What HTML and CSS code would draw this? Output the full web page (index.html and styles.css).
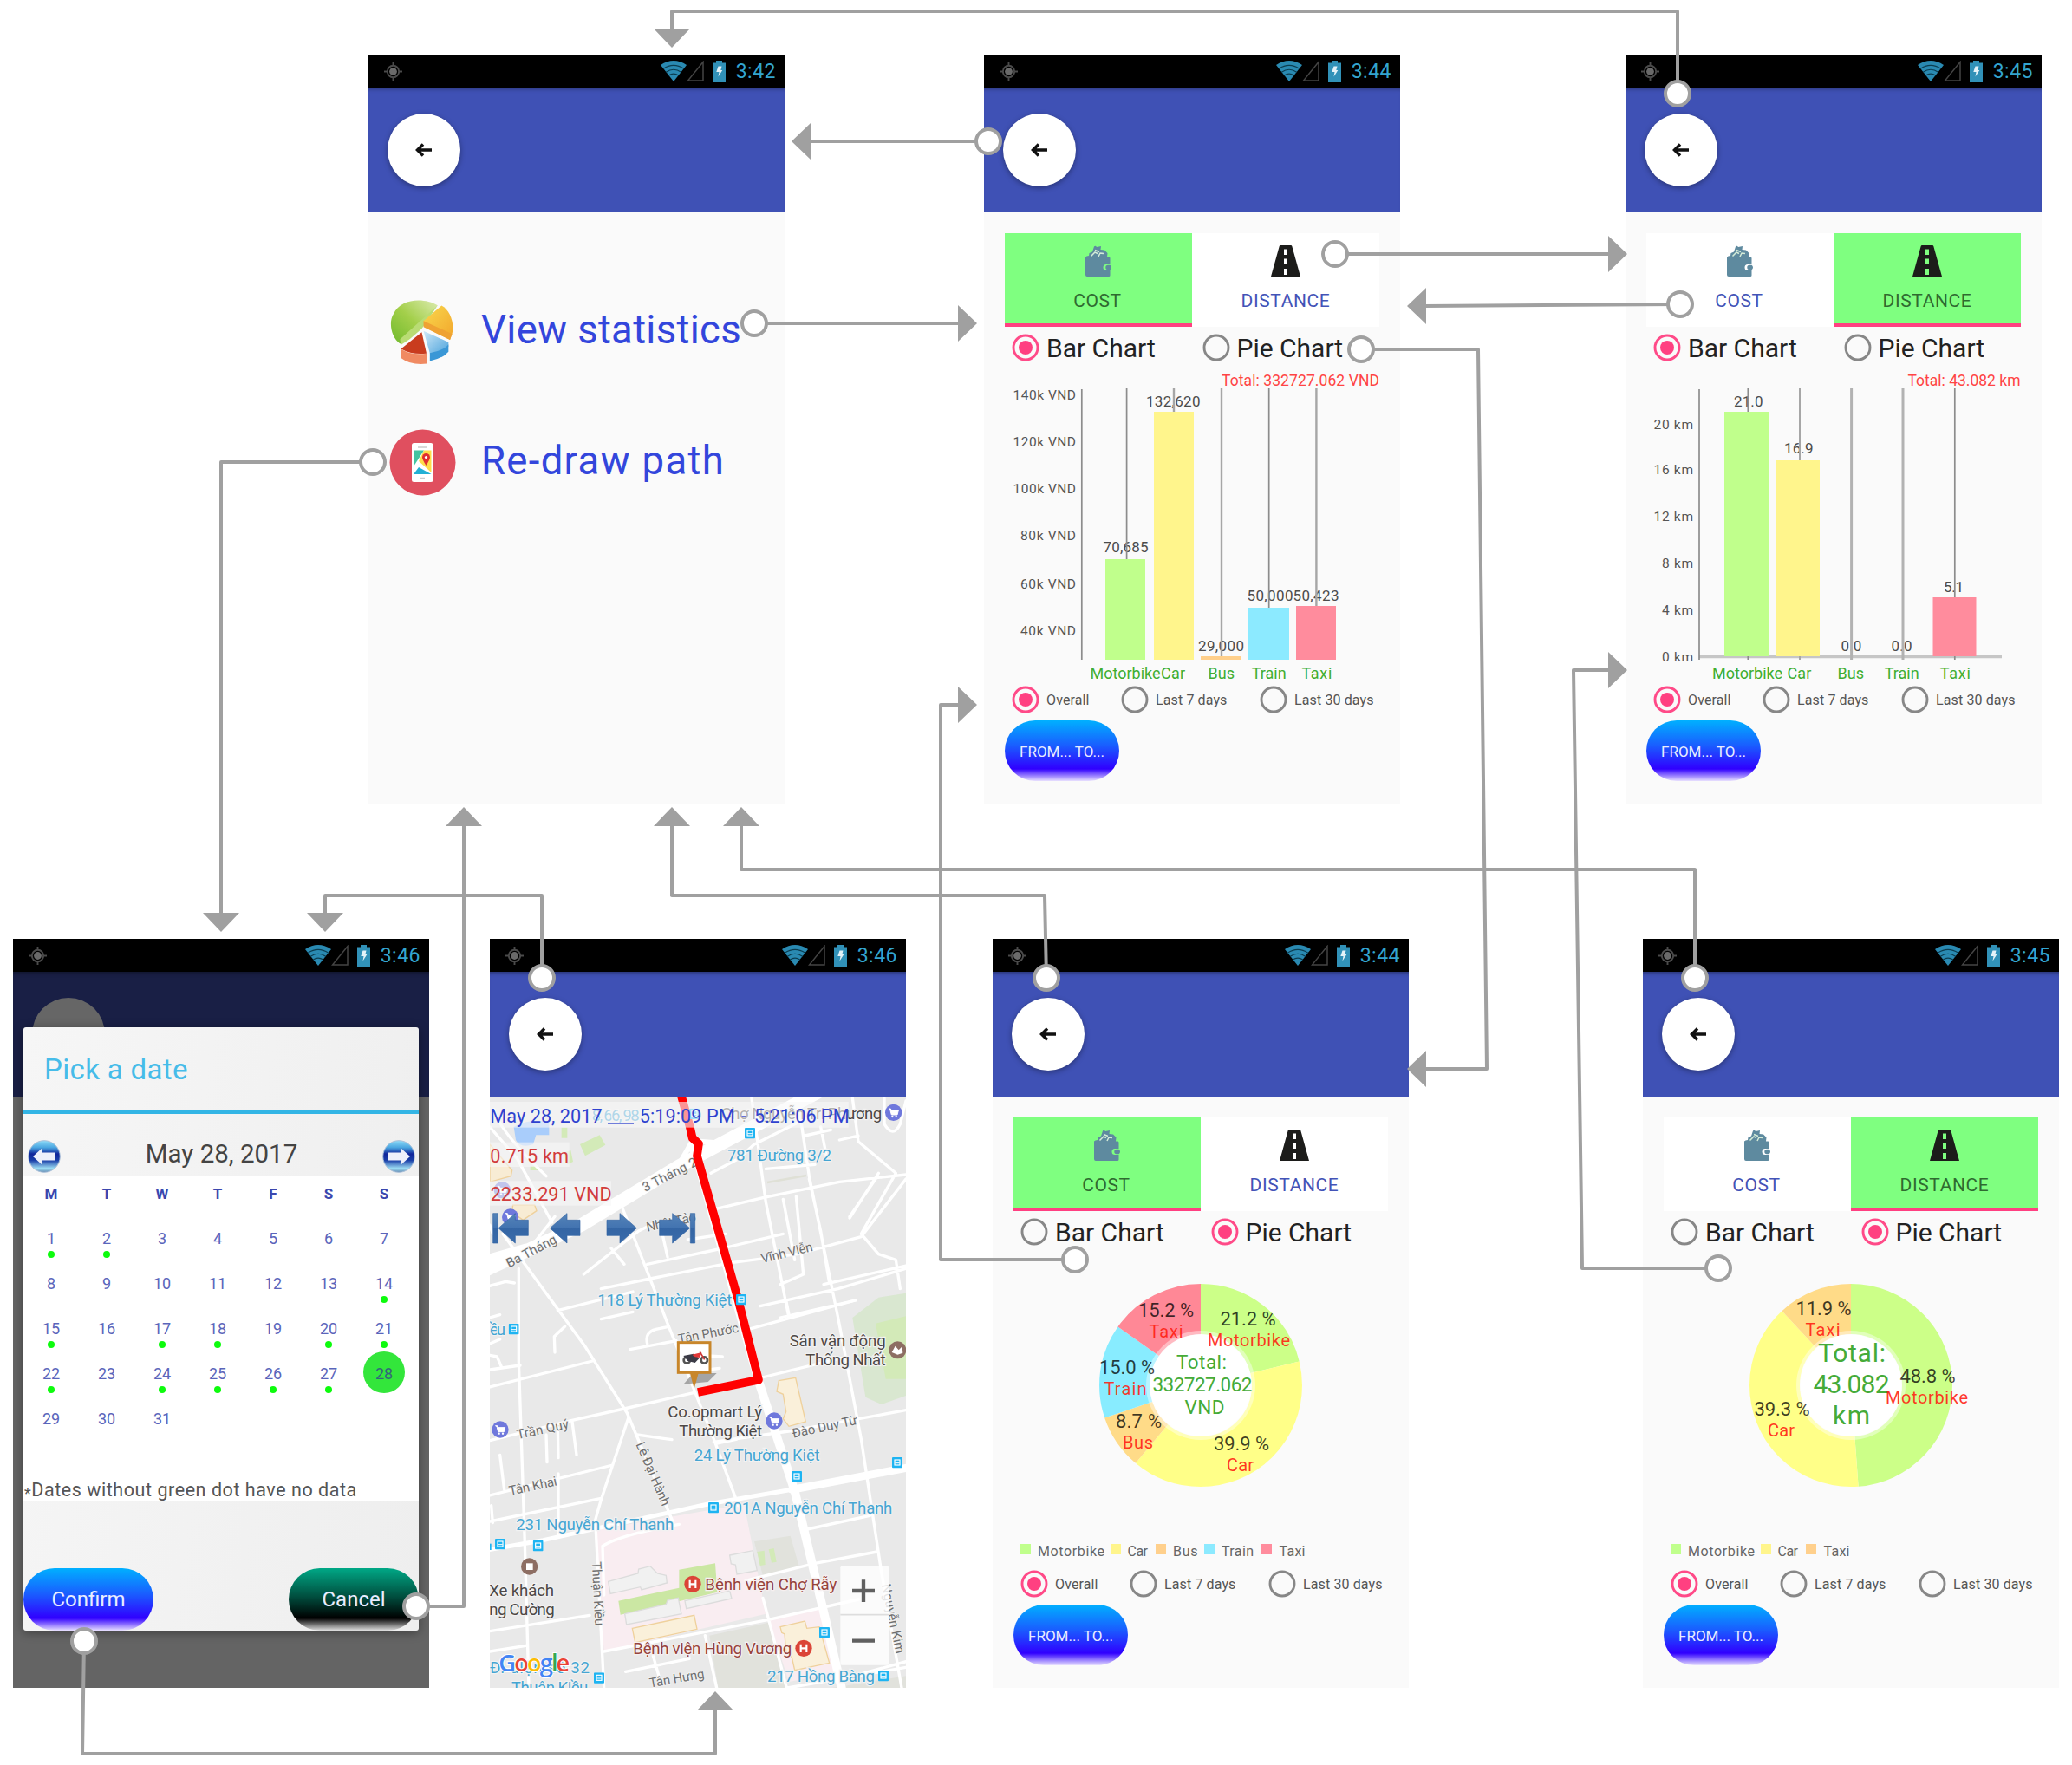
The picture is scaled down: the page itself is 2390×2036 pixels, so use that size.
FILE: index.html
```html
<!DOCTYPE html>
<html lang="en">
<head>
<meta charset="utf-8">
<title>Statistics and path screens flow</title>
<link rel="stylesheet" href="styles.css">
</head>
<body>
<svg class="defs" width="0" height="0" aria-hidden="true">
  <defs>
    <linearGradient id="gGreen" x1="0" y1="1" x2="1" y2="0"><stop offset="0" stop-color="#6fb92c"/><stop offset=".5" stop-color="#a3cf4a"/><stop offset="1" stop-color="#dcebb0"/></linearGradient>
    <linearGradient id="gYellow" x1="0" y1="0" x2="1" y2="1"><stop offset="0" stop-color="#f9d84d"/><stop offset="1" stop-color="#f2a62c"/></linearGradient>
    <linearGradient id="gBlue" x1="0" y1="0" x2="1" y2="1"><stop offset="0" stop-color="#cfe8f8"/><stop offset="1" stop-color="#4ba3dc"/></linearGradient>
    <linearGradient id="gOrb" x1="0" y1="0" x2="0" y2="1"><stop offset="0" stop-color="#8fdcf8"/><stop offset=".22" stop-color="#4aa5e0"/><stop offset=".42" stop-color="#10249a"/><stop offset=".62" stop-color="#1a3fa8"/><stop offset=".88" stop-color="#9fe0f5"/><stop offset="1" stop-color="#5f86b0"/></linearGradient>
    <linearGradient id="gStep" x1="0" y1="0" x2="0" y2="1"><stop offset="0" stop-color="#5583b8"/><stop offset=".5" stop-color="#4273b0"/><stop offset=".52" stop-color="#3465a4"/><stop offset="1" stop-color="#3a6cab"/></linearGradient>
    <symbol id="gps" viewBox="0 0 22 22"><circle cx="11" cy="11" r="7" fill="none" stroke="#4b4b4b" stroke-width="2"/><circle cx="11" cy="11" r="4.600" fill="#6a6a6a"/><path d="M11 0v4M11 18v4M0 11h4M18 11h4" stroke="#4b4b4b" stroke-width="2"/></symbol>
    <symbol id="wifi" viewBox="0 0 30 24"><path d="M0 5Q15-5 30 5L15 24Z" fill="#2a8ab2"/><path d="M3.2 9.2Q15 1.5 26.8 9.2M6.3 13.2Q15 7.3 23.7 13.2M9.3 17Q15 13.3 20.7 17" fill="none" stroke="#0b3d50" stroke-width="1.2"/></symbol>
    <symbol id="signal" viewBox="0 0 20 24"><path d="M19 1.5V23H1.5Z" fill="none" stroke="#444" stroke-width="1.5"/></symbol>
    <symbol id="battery" viewBox="0 0 15 25"><path d="M4 0h7v2.500h4V25H0V2.500h4Z" fill="#3191b8"/><path d="M6.500 6.500h4L9.300 11h2L6.500 18.500 7.500 13H4.300Z" fill="#e4f2f8"/></symbol>
    <symbol id="back" viewBox="0 0 20 16"><path d="M9 1.500 2.500 8 9 14.500M3 8H19" fill="none" stroke="#111" stroke-width="3.500"/></symbol>
    <symbol id="wallet" viewBox="0 0 30 36"><path d="M0 13.500Q1 12 4 12L4.500 9 8 7.500 10 1.500Q11.500 0 13 2L18 1 17.500 5 22 5.500 25.500 9 25 13.500H27.500Q28.500 13.500 28.500 15V22H24a3.500 3.500 0 0 0 0 7h4.500V34.500Q28.500 36 27 36H2Q0 36 0 34Z" fill="#5e8a9f"/><path d="M6.500 12.500 11 8l3 1.500M15 13l2-4 4 .5M11 5.500l5 2" fill="none" stroke="#d4ecd8" stroke-width="1.500"/><path d="M26 22.800h2.500q1.500 1 1.500 2.700t-1.500 2.700H26a2.700 2.700 0 0 1 0-5.400Z" fill="#5e8a9f"/></symbol>
    <symbol id="road" viewBox="0 0 34 36"><path fill-rule="evenodd" d="M11 0H23Q24 0 24.300 1L34 36H0L9.700 1Q10 0 11 0ZM15 4.500V11h4V4.500ZM15 15.500V22h4V15.500ZM15 27V34h4V27Z" fill="#1c1c1a"/></symbol>
    <symbol id="radio-on" viewBox="0 0 32 32"><circle cx="16" cy="16" r="14" fill="none" stroke="#ff4a88" stroke-width="2.900"/><circle cx="16" cy="16" r="8" fill="#ff4081"/></symbol>
    <symbol id="radio-off" viewBox="0 0 32 32"><circle cx="16" cy="16" r="14" fill="none" stroke="#878787" stroke-width="2.900"/></symbol>
    <symbol id="orb-left" viewBox="0 0 38 38"><circle cx="19" cy="19" r="18.300" fill="url(#gOrb)" stroke="#a9bfd8" stroke-width="1"/><path d="M6 19 17 9V14.500H31V23.500H17V29Z" fill="#eef0fb"/></symbol>
    <symbol id="orb-right" viewBox="0 0 38 38"><circle cx="19" cy="19" r="18.300" fill="url(#gOrb)" stroke="#a9bfd8" stroke-width="1"/><path d="M32 19 21 9V14.500H7V23.500H21V29Z" fill="#eef0fb"/></symbol>
    <symbol id="bus" viewBox="0 0 36 40"><rect width="36" height="37" rx="3" fill="#1eb4f2"/><rect x="9" y="9" width="18" height="18" fill="none" stroke="#fff" stroke-width="3.500"/><path d="M10 20h16" stroke="#fff" stroke-width="3"/></symbol>
    <symbol id="cart" viewBox="0 0 60 60"><circle cx="30" cy="30" r="29" fill="#6f78dc"/><path d="M13 17h7l3 6h24l-4 15H23L19 23" fill="#fff" stroke="#fff" stroke-width="3"/><circle cx="26" cy="44" r="3.500" fill="#fff"/><circle cx="39" cy="44" r="3.500" fill="#fff"/></symbol>
    <symbol id="hospital" viewBox="0 0 60 60"><circle cx="30" cy="30" r="29" fill="#db4437"/><path d="M20 16V44M40 16V44M20 30H40" stroke="#fff" stroke-width="6.500"/></symbol>
  </defs>
</svg>

<main class="board">
  <section class="phone menu-screen">
    <div class="status"><svg class="i-gps"><use href="#gps"/></svg><svg class="i-wifi"><use href="#wifi"/></svg><svg class="i-signal"><use href="#signal"/></svg><svg class="i-battery"><use href="#battery"/></svg><span class="time">3:42</span></div>
    <header class="appbar"><div class="back"><svg><use href="#back"/></svg></div></header>
    <nav class="menu">
      <div class="menu-item">
        <svg class="menu-icon" viewBox="144 874 222 193" preserveAspectRatio="none">
          <path d="M180 1003C150 985 141 940 158 917C180 872 260 868 305 892L262 930Z" fill="url(#gGreen)"/>
          <path d="M305 892 180 990 182 1007 212 990 252 960Z" fill="#b9dc74"/>
          <path d="M258 937 318 893C346 905 362 945 353 975L346 992 262 955Z" fill="url(#gYellow)"/>
          <path d="M258 955 346 992 353 975 258 937Z" fill="#efa233"/>
          <path d="M258 966 341 999V1012Q320 1027 280 1034Z" fill="url(#gBlue)"/>
          <path d="M341 1005V1026Q320 1047 279 1053V1030Q325 1023 341 1005Z" fill="#3a97d6"/>
          <path d="M252 970 183 1018Q220 1036 268 1031Z" fill="#c93c1e"/>
          <path d="M182 1018Q220 1038 269 1031V1061Q215 1066 184 1045Z" fill="#f08a62"/>
        </svg>
        <span>View statistics</span>
      </div>
      <div class="menu-item">
        <svg class="menu-icon" viewBox="0 0 77 77"><circle cx="38.500" cy="38.500" r="38" fill="#e04f5f"/><rect x="26" y="16" width="24.500" height="45" rx="2.500" fill="#fff"/><path d="M28 24.500H40L28 43Z" fill="#44c4a1"/><path d="M40 24.500H48.500V50L34 37Z" fill="#fedd4a"/><path d="M28 52 34 44 48.500 52Z" fill="#22b0d4"/><path d="M42.500 42Q38 35 38 32.500a4.500 4.500 0 0 1 9 0Q47 35 42.500 42Z" fill="#e02f2f"/><circle cx="42.500" cy="32.500" r="1.600" fill="#fff"/><path d="M33 21h11M36 56.500h5" stroke="#ccc" stroke-width="1.300"/></svg>
        <span class="redraw">Re-draw path</span>
      </div>
    </nav>
  </section>

  <section class="phone cost-bar-screen">
    <div class="status"><svg class="i-gps"><use href="#gps"/></svg><svg class="i-wifi"><use href="#wifi"/></svg><svg class="i-signal"><use href="#signal"/></svg><svg class="i-battery"><use href="#battery"/></svg><span class="time">3:44</span></div>
    <header class="appbar"><div class="back"><svg><use href="#back"/></svg></div></header>
    <div class="tabs">
      <div class="tab selected"><svg class="wallet"><use href="#wallet"/></svg><span>COST</span></div>
      <div class="tab"><svg class="road"><use href="#road"/></svg><span>DISTANCE</span></div>
    </div>
    <div class="kinds">
      <label><svg><use href="#radio-on"/></svg>Bar Chart</label>
      <label><svg><use href="#radio-off"/></svg>Pie Chart</label>
    </div>
    <svg class="chart" viewBox="0 362 480 358">
      <path d="M140 582h46V698h-46Z" fill="#c0ff8c"/><path d="M196 412h46V698h-46Z" fill="#fff58c"/><path d="M250 694h46v4h-46Z" fill="#ffd08c"/><path d="M304 638h48v60h-48Z" fill="#8ceaff"/><path d="M360 636h46v62h-46Z" fill="#ff8c9d"/>
      <text class="total" x="274" y="381.700" textLength="182">Total: 332727.062 VND</text>
      <g class="ticks"><text x="33.500" y="397.700" textLength="72.500">140k VND</text><text x="33.500" y="452" textLength="72.500">120k VND</text><text x="33.500" y="506" textLength="72.500">100k VND</text><text x="42" y="560" textLength="64">80k VND</text><text x="42" y="615.700" textLength="64">60k VND</text><text x="42" y="669.700" textLength="64">40k VND</text></g>
      <g class="values"><text x="137.500" y="573.700" textLength="52">70,685</text><text x="187" y="406" textLength="62.500">132,620</text><text x="247" y="687.700" textLength="53">29,000</text><text x="303.500" y="630" textLength="53">50,000</text><text x="356.500" y="630" textLength="53">50,423</text></g>
      <g fill="none" stroke="#8c8c8c" stroke-width="1.700"><path d="M112.800 386V698"/><path d="M164.600 384.500V582M328.700 384.500V638"/><path stroke="#a6a6a6" stroke-width="2.400" d="M219 384.500V412M274 384.500V694M383.400 384.500V636"/></g>
      <g class="cats"><text x="122.500" y="720.300" textLength="81">Motorbike</text><text x="204" y="720.300" textLength="28">Car</text><text x="258.500" y="720.300" textLength="30.500">Bus</text><text x="308.700" y="720.300" textLength="40">Train</text><text x="366.400" y="720.300" textLength="35">Taxi</text></g>
    </svg>
    <div class="ranges">
      <label><svg><use href="#radio-on"/></svg>Overall</label><label><svg><use href="#radio-off"/></svg>Last 7 days</label><label><svg><use href="#radio-off"/></svg>Last 30 days</label>
    </div>
    <div class="pill from-to">FROM... TO...</div>
  </section>

  <section class="phone distance-bar-screen">
    <div class="status"><svg class="i-gps"><use href="#gps"/></svg><svg class="i-wifi"><use href="#wifi"/></svg><svg class="i-signal"><use href="#signal"/></svg><svg class="i-battery"><use href="#battery"/></svg><span class="time">3:45</span></div>
    <header class="appbar"><div class="back"><svg><use href="#back"/></svg></div></header>
    <div class="tabs">
      <div class="tab"><svg class="wallet"><use href="#wallet"/></svg><span>COST</span></div>
      <div class="tab selected"><svg class="road"><use href="#road"/></svg><span>DISTANCE</span></div>
    </div>
    <div class="kinds">
      <label><svg><use href="#radio-on"/></svg>Bar Chart</label>
      <label><svg><use href="#radio-off"/></svg>Pie Chart</label>
    </div>
    <svg class="chart" viewBox="0 362 480 358">
      <path d="M85 694.300H434" stroke="#c6c6c6" stroke-width="4"/>
      <text class="total" x="325.500" y="381.700" textLength="130">Total: 43.082 km</text>
      <g class="ticks"><text x="32.500" y="431.700" textLength="45.500">20 km</text><text x="32.500" y="484" textLength="45.500">16 km</text><text x="32.500" y="538" textLength="45.500">12 km</text><text x="42" y="592" textLength="36">8 km</text><text x="42" y="645.700" textLength="36">4 km</text><text x="42" y="699.700" textLength="36">0 km</text></g>
      <g class="values"><text x="125" y="406" textLength="33.500">21.0</text><text x="183" y="459.700" textLength="33.500">16.9</text><text x="248.400" y="687.700" textLength="24">0.0</text><text x="306.600" y="687.700" textLength="24">0.0</text><text x="367" y="620" textLength="23">5.1</text></g>
      <g fill="none" stroke="#8c8c8c" stroke-width="1.700"><path d="M85 386V698"/><path d="M141.300 384.500V698M379.800 384.500V698"/><path stroke="#a6a6a6" stroke-width="2" d="M201 384.500V698"/><path stroke="#b2b2b2" stroke-width="3" d="M260.600 384.500V698M320 384.500V698"/></g>
      <path d="M114 412h52V694h-52Z" fill="#c0ff8c"/><path d="M174 468h50V694h-50Z" fill="#fff58c"/><path d="M354.500 626h50v68h-50Z" fill="#ff8c9d"/>
      <g class="cats"><text x="100" y="720.300" textLength="81">Motorbike</text><text x="186.400" y="720.300" textLength="28">Car</text><text x="244.500" y="720.300" textLength="30.500">Bus</text><text x="298.700" y="720.300" textLength="40">Train</text><text x="362.800" y="720.300" textLength="35">Taxi</text></g>
    </svg>
    <div class="ranges">
      <label><svg><use href="#radio-on"/></svg>Overall</label><label><svg><use href="#radio-off"/></svg>Last 7 days</label><label><svg><use href="#radio-off"/></svg>Last 30 days</label>
    </div>
    <div class="pill from-to">FROM... TO...</div>
  </section>

  <section class="phone date-screen">
    <div class="status"><svg class="i-gps"><use href="#gps"/></svg><svg class="i-wifi"><use href="#wifi"/></svg><svg class="i-signal"><use href="#signal"/></svg><svg class="i-battery"><use href="#battery"/></svg><span class="time">3:46</span></div>
    <header class="appbar"><div class="back"></div></header>
    <div class="dialog">
      <h2 class="dialog-title">Pick a date</h2>
      <div class="month"><svg><use href="#orb-left"/></svg><span>May 28, 2017</span><svg><use href="#orb-right"/></svg></div>
      <div class="calendar">
        <div class="days">
          <b>M</b><b>T</b><b>W</b><b>T</b><b>F</b><b>S</b><b>S</b>
          <i class="has">1</i><i class="has">2</i><i>3</i><i>4</i><i>5</i><i>6</i><i>7</i>
          <i>8</i><i>9</i><i>10</i><i>11</i><i>12</i><i>13</i><i class="has">14</i>
          <i class="has">15</i><i>16</i><i class="has">17</i><i class="has">18</i><i>19</i><i class="has">20</i><i class="has">21</i>
          <i class="has">22</i><i>23</i><i class="has">24</i><i class="has">25</i><i class="has">26</i><i class="has">27</i><i class="picked">28</i>
          <i>29</i><i>30</i><i>31</i>
        </div>
        <p class="note"><span class="star">*</span>Dates without green dot have no data</p>
      </div>
      <div class="actions"><div class="pill confirm">Confirm</div><div class="pill cancel">Cancel</div></div>
    </div>
  </section>

  <section class="phone map-screen">
    <div class="status"><svg class="i-gps"><use href="#gps"/></svg><svg class="i-wifi"><use href="#wifi"/></svg><svg class="i-signal"><use href="#signal"/></svg><svg class="i-battery"><use href="#battery"/></svg><span class="time">3:46</span></div>
    <header class="appbar"><div class="back"><svg><use href="#back"/></svg></div></header>
    <svg class="map" viewBox="45 585 1440 2046">
      <rect x="45" y="585" width="1440" height="2046" fill="#e9e9e9"/>
      <!-- parks, water and blocks -->
      <path d="M128 690Q180 660 250 672V718H205L195 750Q150 765 135 735Z" fill="#a9cdfb"/>
      <path d="M357 750 425 718 445 752 375 790ZM293 692h20v36h-20ZM185 825h25v15h-25ZM300 780l25-10 8 40-20 10Z" fill="#d3eab8"/>
      <path d="M45 750 122 840 118 860 45 880ZM125 960 200 960 207 980 160 1012 122 985Z" fill="#f8ecd4" stroke="#efd19c" stroke-width="4"/>
      <path d="M1300 1350 1390 1280 1485 1265V1620L1400 1650 1345 1625Z" fill="#d9e7d0"/>
      <path d="M1380 1370 1485 1345V1562H1415Z" fill="#d3eab8"/>
      <g transform="translate(0 1290)">
        <path d="M410 795 925 705 1000 1085 440 1215Z" fill="#f9edf1"/>
        <path d="M1010 1105 1195 1065 1245 1290 1080 1320Z" fill="#f9edf1"/>
        <path d="M960 835 1085 815 1115 920 990 955Z" fill="#e1e2dc"/>
        <path d="M805 1160 1010 1115 1072 1341H835Z" fill="#e1e2dc"/>
        <path d="M1230 1341 1485 1300V1341Z" fill="#e1e2dc"/>
        <path d="M700 932 825 910 832 1010 705 1040 497 1088 490 1040 700 995Z" fill="#cbe7a3"/>
        <path d="M970 870 995 866 998 915 980 918ZM1010 862 1028 858 1037 905 1020 908Z" fill="#d3eab8"/>
        <g fill="#f1f1f1" stroke="#dcdcdc" stroke-width="4"><path d="M455 973 558 945 560 930 600 920 625 945 655 952 658 978 570 1002 566 992 462 1015Z"/><path d="M875 882 955 866 970 935 900 948 895 915 880 912Z"/><path d="M512 1085 655 1052 660 1038 697 1030 708 1085 518 1122Z"/><path d="M720 1040 875 1005 882 1032 725 1067Z"/></g>
        <g fill="#faf0da" stroke="#efd19c" stroke-width="4"><path d="M538 1135 752 1090 762 1138 548 1184Z"/><path d="M1045 278 1103 268 1138 420 1080 436 1060 410 1070 385 1060 325 1038 315Z"/><path d="M1050 1130 1135 1110 1142 1135 1185 1130 1220 1255 1100 1280 1090 1235 1070 1215 1065 1155 1055 1150Z"/></g>
      </g>
      <!-- streets -->
      <g fill="none" stroke="#fff" stroke-linejoin="round" stroke-linecap="round">
        <path stroke-width="46" d="M20 1190 360 1030 700 825 1180 570"/>
        <path stroke-width="32" d="M45 1145 170 1110M745 760 765 790"/>
        <path stroke-width="18" d="M700 820 745 740M770 740 830 745"/>
        <path stroke-width="30" d="M760 790 975 1570 1100 1950 1215 2430 1262 2631"/>
        <path stroke-width="10" d="M45 690 140 800 260 1020M90 1060 170 1170 375 1450 520 1680 680 2060M145 1180 145 1500 165 2100 180 2631M60 630Q75 700 240 860M45 1030 55 1060M160 1140 270 1000M370 1200 560 1050 620 1020M465 1110 510 1165M500 960 660 1370 820 1770 905 2000M640 1050 660 1140M590 1165 850 1110 1060 1060M800 980 990 935 1255 880 1485 855M810 850 905 800 960 750 1160 650M730 1080 860 1060M430 1250 600 1215 880 1160 1110 1130 1330 1070 1485 870M950 585 1000 950 1080 1350M1110 590 1150 860 1250 1350 1330 1770 1400 2230 1470 2631M1300 590 1320 740 1450 850 1330 1060 1390 1130 1450 1150 1465 1250M1000 835 1170 820M1135 720 1225 700M1060 940 1100 1150M1105 930 1130 1200 1050 1235M1150 870 1190 1050 1220 1230M1190 690 1210 790M1380 870 1290 1000M1390 850 1290 1005M1255 735 1320 720M1410 590 1410 680Q1440 730 1465 680L1485 600M1200 1235 1485 1170M980 1310 1250 1250 1485 1180M1050 1350 1310 1290M280 1325 540 1260M45 1240 100 1225 130 1230M540 1330 430 1355"/>
        <g transform="translate(0 1290)">
          <path stroke-width="15" d="M30 865 230 830 420 788 800 705 1090 655"/>
          <path stroke-width="27" d="M1090 655 1485 580"/>
          <path stroke-width="10" d="M45 300 400 210M45 240 150 225M45 190 70 195 85 230M270 180 268 125 305 90M45 485 330 415 510 375 750 320M45 675 470 570M45 765 430 685M525 405 430 690 410 760 440 1341M555 465 675 482M80 535 95 655M240 465 243 560M280 440 282 545M330 420 345 535M282 600 282 815M440 1020 435 850Q500 810 700 775M530 170 690 140M590 150Q580 110 620 100L660 92M975 270 1260 200M940 100 1310 0M830 495 900 480M820 490 1100 450 1485 380M1130 795 1360 745M930 970 1170 910 1385 870M990 1030 1010 1105 1072 1341M45 1145 390 1090M45 1215 170 1195M440 1215 1010 1105 1320 1035M790 1160 830 1341M515 1285 735 1240 730 1200M610 1230 630 1300M770 190 850 195M800 240 840 235M1075 1341 1485 1270M1230 1320 1485 1250M45 60 80 50M45 150 80 135M50 710 55 770M1070 0 1080 50"/>
        </g>
      </g>
      <path d="M1005 882 1140 858" stroke="#dfe0d6" stroke-width="8"/>
      <!-- street names -->
      <g class="street">
        <text transform="translate(583 915) rotate(-27)" textLength="205">3 Tháng 2</text>
        <text transform="translate(112 1178) rotate(-28)" textLength="190">Ba Tháng</text>
        <text transform="translate(590 1052) rotate(-12)" textLength="175">Nhật Tảo</text>
        <text transform="translate(988 1162) rotate(-14)" textLength="182">Vĩnh Viễn</text>
        <g transform="translate(0 1290)">
          <text transform="translate(700 150) rotate(-11)" textLength="212">Tân Phước</text>
          <text transform="translate(142 480) rotate(-12)" textLength="182">Trần Quý</text>
          <text transform="translate(115 675) rotate(-12)" textLength="168">Tân Khai</text>
          <text transform="translate(550 498) rotate(67)" textLength="235">Lê Đại Hành</text>
          <text transform="translate(1095 476) rotate(-12)" textLength="228">Đào Duy Từ</text>
          <text transform="translate(398 905) rotate(87)" textLength="222">Thuận Kiều</text>
          <text transform="translate(1400 985) rotate(78)" textLength="245">Nguyễn Kim</text>
          <text transform="translate(600 1340) rotate(-10)" textLength="192">Tân Hưng</text>
        </g>
      </g>
      <!-- recorded path -->
      <path d="M707 580 738 692 746 728 768 748 762 790 905 1290 975 1565 765 1608" fill="none" stroke="#f00" stroke-width="29" stroke-linejoin="round"/>
      <!-- stops and places -->
      <use href="#bus" x="927" y="693" width="36" height="40"/><use href="#bus" x="735" y="626" width="36" height="40"/><use href="#bus" x="897" y="1269" width="36" height="40"/>
      <use href="#cart" x="1412" y="610" width="60" height="60"/><use href="#cart" x="58" y="878" width="60" height="60"/><use href="#cart" x="86" y="972" width="60" height="60"/>
      <text class="stop" x="867" y="807" textLength="360">781 Đường 3/2</text>
      <text class="stop" x="418" y="1309" textLength="465">118 Lý Thường Kiệt</text>
      <text class="stop" x="398" y="668" textLength="165">8, 66, 98</text>
      <text class="place" x="845" y="662" textLength="557">Chợ Nguyễn Tri Phương</text>
      <g transform="translate(0 1290)">
        <use href="#bus" x="110" y="81" width="36" height="40"/><use href="#bus" x="1437" y="543" width="36" height="40"/><use href="#bus" x="1089" y="591" width="36" height="40"/><use href="#bus" x="801" y="699" width="36" height="40"/><use href="#bus" x="63" y="825" width="36" height="40"/><use href="#bus" x="194" y="831" width="36" height="40"/><use href="#bus" x="1185" y="1131" width="36" height="40"/><use href="#bus" x="405" y="1288" width="36" height="40"/><use href="#bus" x="1389" y="1281" width="36" height="40"/><rect x="45" y="842" width="5" height="22" fill="#1eb4f2"/>
        <use href="#cart" x="51" y="417" width="60" height="60"/><use href="#cart" x="999" y="387" width="60" height="60"/>
        <use href="#hospital" x="717" y="952" width="60" height="60"/><use href="#hospital" x="1101" y="1174" width="60" height="60"/>
        <circle cx="182" cy="921" r="29" fill="#8d6e63"/><rect x="171" y="910" width="23" height="23" fill="#fff"/>
        <circle cx="1456" cy="172" r="30" fill="#8d6e63"/><path d="M1436 180 1448 158 1460 172 1472 160 1474 182 1456 188Z" fill="#fff"/>
        <text class="stop" x="45" y="121" textLength="54">ều</text>
        <text class="stop" x="752" y="556" textLength="435">24 Lý Thường Kiệt</text>
        <text class="stop" x="856" y="739" textLength="582">201A Nguyễn Chí Thanh</text>
        <text class="stop" x="136" y="796" textLength="546">231 Nguyễn Chí Thanh</text>
        <text class="stop" x="1005" y="1321" textLength="372">217 Hồng Bàng</text>
        <text class="stop" x="45" y="1291" textLength="345">Đ. diện số 32</text>
        <text class="stop" x="120" y="1358" textLength="265">Thuận Kiều</text>
        <text class="place" x="1082" y="158" textLength="333">Sân vận động</text><text class="place" x="1138" y="226" textLength="277">Thống Nhất</text>
        <text class="place" x="661" y="405" textLength="326">Co.opmart Lý</text><text class="place" x="700" y="472" textLength="287">Thường Kiệt</text>
        <text class="place" x="43" y="1023" textLength="224">Xe khách</text><text class="place" x="43" y="1090" textLength="226">ng Cường</text>
        <text class="clinic" x="790" y="1003" textLength="456">Bệnh viện Chợ Rẫy</text><text class="clinic" x="541" y="1225" textLength="549">Bệnh viện Hùng Vương</text>
        <!-- motorbike marker -->
        <path d="M715 290 750 252H830L800 282Z" fill="#777" opacity=".6"/>
        <path d="M738 252H767L752 306Z" fill="#c8862a"/><rect x="697" y="146" width="110" height="104" fill="#fff" stroke="#c8862a" stroke-width="9"/>
        <circle cx="727" cy="207" r="11" fill="none" stroke="#555" stroke-width="8"/><circle cx="787" cy="207" r="11" fill="none" stroke="#555" stroke-width="8"/><path d="M715 192 750 185 770 200 755 216 730 210Z" fill="#3b3b46"/><path d="M745 188 778 180 772 198 755 196Z" fill="#e23838"/><path d="M772 178 788 205" stroke="#c33" stroke-width="5"/>
        <!-- zoom buttons -->
        <rect x="1258" y="920" width="168" height="342" rx="5" fill="#fff" opacity=".82"/><path d="M1258 1088H1426" stroke="#ddd" stroke-width="5"/><path d="M1299 1005H1377M1338 967V1044M1299 1178H1377" stroke="#606060" stroke-width="13"/>
        <text class="google" x="76" y="1285" textLength="246"><tspan fill="#4285f4">G</tspan><tspan fill="#ea4335">o</tspan><tspan fill="#fbbc05">o</tspan><tspan fill="#4285f4">g</tspan><tspan fill="#34a853">l</tspan><tspan fill="#ea4335">e</tspan></text>
      </g>
      <!-- trip details -->
      <g fill="#f8f8f8" opacity=".6"><rect x="45" y="603" width="1241" height="89"/><rect x="45" y="743" width="275" height="85"/><rect x="45" y="877" width="420" height="85"/></g>
      <g class="trip"><text x="46" y="675" textLength="388">May 28, 2017</text><text x="563" y="675" textLength="330">5:19:09 PM</text><text x="915" y="675">-</text><text x="960" y="675" textLength="329">5:21:06 PM</text><path d="M453 678H543" stroke="#2f42cf" stroke-width="4"/></g>
      <g class="cost"><text x="46" y="812" textLength="272">0.715 km</text><text x="47" y="945" textLength="420">2233.291 VND</text></g>
      <g fill="url(#gStep)" stroke="#3465a4" stroke-width="2"><path d="M56 989H73V1092H56ZM75 1040 133 989V1012H178V1066H133V1092Z"/><path d="M253 1040 312 989V1012H357V1066H312V1092Z"/><path d="M553 1040 495 989V1012H450V1066H495V1092Z"/><path d="M755 989H739V1092H755ZM737 1040 677 989V1012H632V1066H677V1092Z"/></g>
    </svg>
  </section>

  <section class="phone cost-pie-screen">
    <div class="status"><svg class="i-gps"><use href="#gps"/></svg><svg class="i-wifi"><use href="#wifi"/></svg><svg class="i-signal"><use href="#signal"/></svg><svg class="i-battery"><use href="#battery"/></svg><span class="time">3:44</span></div>
    <header class="appbar"><div class="back"><svg><use href="#back"/></svg></div></header>
    <div class="tabs">
      <div class="tab selected"><svg class="wallet"><use href="#wallet"/></svg><span>COST</span></div>
      <div class="tab"><svg class="road"><use href="#road"/></svg><span>DISTANCE</span></div>
    </div>
    <div class="kinds">
      <label><svg><use href="#radio-off"/></svg>Bar Chart</label>
      <label><svg><use href="#radio-on"/></svg>Pie Chart</label>
    </div>
    <svg class="chart" viewBox="0 362 480 358">
      <g fill="none" stroke-width="58" transform="rotate(-90 240 515)">
        <circle cx="240" cy="515" r="88" pathLength="100" stroke="#ccff88" stroke-dasharray="21.200 100"/>
        <circle cx="240" cy="515" r="88" pathLength="100" stroke="#ffff88" stroke-dasharray="39.900 100" stroke-dashoffset="-21.200"/>
        <circle cx="240" cy="515" r="88" pathLength="100" stroke="#ffdb88" stroke-dasharray="8.700 100" stroke-dashoffset="-61.100"/>
        <circle cx="240" cy="515" r="88" pathLength="100" stroke="#88ecff" stroke-dasharray="15 100" stroke-dashoffset="-69.800"/>
        <circle cx="240" cy="515" r="88" pathLength="100" stroke="#ff8896" stroke-dasharray="15.200 100" stroke-dashoffset="-84.800"/>
      </g>
      <circle cx="240" cy="515" r="63" fill="#fff" opacity=".42"/><circle cx="240" cy="515" r="58.500" fill="#fff"/>
      <g class="share"><text x="168" y="436" textLength="64">15.2 %</text><text x="262.500" y="445.700" textLength="64">21.2 %</text><text x="123" y="501.700" textLength="64">15.0 %</text><text x="142" y="563.700" textLength="53">8.7 %</text><text x="255" y="589.700" textLength="64">39.9 %</text></g>
      <g class="slice"><text x="180.500" y="459.700" textLength="39">Taxi</text><text x="248" y="469.700" textLength="95">Motorbike</text><text x="128.500" y="526" textLength="49">Train</text><text x="150" y="588" textLength="35">Bus</text><text x="270" y="614" textLength="31">Car</text></g>
      <g class="center"><text x="212" y="496" textLength="58">Total:</text><text x="184.500" y="522" textLength="115">332727.062</text><text x="221.500" y="548" textLength="46">VND</text></g>
      <path d="M32 698h12v12H32Z" fill="#c0ff8c"/><path d="M136 698h12v12h-12Z" fill="#fff58c"/><path d="M188 698h12v12h-12Z" fill="#ffd08c"/><path d="M244 698h12v12h-12Z" fill="#8ceaff"/><path d="M310 698h12v12h-12Z" fill="#ff8c9d"/>
      <g class="legend"><text x="52" y="712" textLength="77">Motorbike</text><text x="155.500" y="712" textLength="23.500">Car</text><text x="208" y="712" textLength="28.500">Bus</text><text x="264" y="712" textLength="37">Train</text><text x="330.500" y="712" textLength="30">Taxi</text></g>
    </svg>
    <div class="ranges">
      <label><svg><use href="#radio-on"/></svg>Overall</label><label><svg><use href="#radio-off"/></svg>Last 7 days</label><label><svg><use href="#radio-off"/></svg>Last 30 days</label>
    </div>
    <div class="pill from-to">FROM... TO...</div>
  </section>

  <section class="phone distance-pie-screen">
    <div class="status"><svg class="i-gps"><use href="#gps"/></svg><svg class="i-wifi"><use href="#wifi"/></svg><svg class="i-signal"><use href="#signal"/></svg><svg class="i-battery"><use href="#battery"/></svg><span class="time">3:45</span></div>
    <header class="appbar"><div class="back"><svg><use href="#back"/></svg></div></header>
    <div class="tabs">
      <div class="tab"><svg class="wallet"><use href="#wallet"/></svg><span>COST</span></div>
      <div class="tab selected"><svg class="road"><use href="#road"/></svg><span>DISTANCE</span></div>
    </div>
    <div class="kinds">
      <label><svg><use href="#radio-off"/></svg>Bar Chart</label>
      <label><svg><use href="#radio-on"/></svg>Pie Chart</label>
    </div>
    <svg class="chart" viewBox="0 362 480 358">
      <g fill="none" stroke-width="58" transform="rotate(-90 240 515)">
        <circle cx="240" cy="515" r="88" pathLength="100" stroke="#ccff88" stroke-dasharray="48.800 100"/>
        <circle cx="240" cy="515" r="88" pathLength="100" stroke="#ffff88" stroke-dasharray="39.300 100" stroke-dashoffset="-48.800"/>
        <circle cx="240" cy="515" r="88" pathLength="100" stroke="#ffdb88" stroke-dasharray="11.900 100" stroke-dashoffset="-88.100"/>
      </g>
      <circle cx="240" cy="515" r="63" fill="#fff" opacity=".42"/><circle cx="240" cy="515" r="58.500" fill="#fff"/>
      <g class="share"><text x="176.500" y="434" textLength="64">11.9 %</text><text x="296.500" y="511.700" textLength="64">48.8 %</text><text x="128.500" y="550" textLength="64">39.3 %</text></g>
      <g class="center big"><text x="202" y="488.400" textLength="78">Total:</text><text x="196.500" y="524" textLength="88">43.082</text><text x="219" y="560" textLength="43">km</text></g>
      <g class="slice"><text x="187.500" y="458" textLength="40">Taxi</text><text x="280" y="536" textLength="95">Motorbike</text><text x="144" y="574" textLength="31">Car</text></g>
      <path d="M32 698h12v12H32Z" fill="#c0ff8c"/><path d="M136 698h12v12h-12Z" fill="#fff58c"/><path d="M188 698h12v12h-12Z" fill="#ffd08c"/>
      <g class="legend"><text x="52" y="712" textLength="77">Motorbike</text><text x="155.500" y="712" textLength="23.500">Car</text><text x="208.500" y="712" textLength="30">Taxi</text></g>
    </svg>
    <div class="ranges">
      <label><svg><use href="#radio-on"/></svg>Overall</label><label><svg><use href="#radio-off"/></svg>Last 7 days</label><label><svg><use href="#radio-off"/></svg>Last 30 days</label>
    </div>
    <div class="pill from-to">FROM... TO...</div>
  </section>

  <svg class="links" viewBox="0 0 2390 2036">
    <g fill="none" stroke="#a0a0a0" stroke-width="4" stroke-linejoin="round">
      <path d="M1935 108V13H775V36"/><path d="M1140 163H932"/><path d="M870 373H1107"/><path d="M1540 293H1857"/><path d="M1938 351 1643 353"/>
      <path d="M1570 403H1705L1715 1233H1643"/><path d="M430 533H255V1056"/><path d="M625 1128V1033H375V1056"/><path d="M480 1853H535V950"/>
      <path d="M97 1893 95 2023H825V1970"/><path d="M1207 1128 1205 1033H775V950"/><path d="M1955 1128V1003H855V950"/><path d="M1240 1453H1085V813H1107"/><path d="M1982 1463H1825L1815 773H1857"/>
    </g>
    <g fill="#a0a0a0">
      <path d="M754 33H796L775 55ZM234 1053H276L255 1075ZM354 1053H396L375 1075Z"/>
      <path d="M514 953H556L535 931ZM754 953H796L775 931ZM834 953H876L855 931ZM804 1973H846L825 1951Z"/>
      <path d="M935 142V184L913 163ZM1645 332V374L1623 353ZM1645 1212V1254L1623 1233Z"/>
      <path d="M1105 352V394L1127 373ZM1855 272V314L1877 293ZM1105 792V834L1127 813ZM1855 752V794L1877 773Z"/>
    </g>
    <g fill="#fff" stroke="#a0a0a0" stroke-width="4">
      <circle cx="1935" cy="108" r="14"/><circle cx="1140" cy="163" r="14"/><circle cx="870" cy="373" r="14"/><circle cx="1540" cy="293" r="14"/><circle cx="1938" cy="351" r="14"/><circle cx="1570" cy="403" r="14"/><circle cx="430" cy="533" r="14"/><circle cx="625" cy="1128" r="14"/><circle cx="480" cy="1853" r="14"/><circle cx="97" cy="1893" r="14"/><circle cx="1207" cy="1128" r="14"/><circle cx="1955" cy="1128" r="14"/><circle cx="1240" cy="1453" r="14"/><circle cx="1982" cy="1463" r="14"/>
    </g>
  </svg>
</main>
</body>
</html>
```
FILE: styles.css
```css
* { box-sizing: border-box; }
body { margin: 0; background: #fff; font-family: Roboto, "Noto Sans", sans-serif; color: #222; }
svg { display: block; flex: none; }
.defs { position: absolute; }
.board { position: relative; width: 2390px; height: 2036px; overflow: hidden; }

/* Screens are nodes on the flow diagram */
.phone { position: absolute; width: 480px; height: 864px; background: #fafafa; overflow: hidden; }
.menu-screen { left: 425px; top: 63px; }
.cost-bar-screen { left: 1135px; top: 63px; }
.distance-bar-screen { left: 1875px; top: 63px; }
.date-screen { left: 15px; top: 1083px; }
.map-screen { left: 565px; top: 1083px; }
.cost-pie-screen { left: 1145px; top: 1083px; }
.distance-pie-screen { left: 1895px; top: 1083px; }
.links { position: absolute; inset: 0; width: 2390px; height: 2036px; }

.status { display: flex; align-items: center; height: 38px; padding: 0 10px 0 18px; background: #000; }
.i-gps { width: 21px; height: 21px; margin-right: auto; }
.i-wifi { width: 30px; height: 24px; }
.i-signal { width: 20px; height: 24px; }
.i-battery { width: 15px; height: 25px; margin: 0 12px 0 10px; }
.time { padding-top: 2px; font-size: 23px; line-height: 30px; letter-spacing: .5px; color: #33a5d0; }
.appbar { height: 144px; padding: 30px 22px; background: #3f51b5; box-shadow: inset 0 5px 5px -4px rgba(0,0,0,.45); }
.back { display: flex; align-items: center; justify-content: center; width: 84px; height: 84px; border-radius: 50%; background: #fff; box-shadow: 0 2px 6px rgba(0,0,0,.35); }
.back svg { width: 20px; height: 16px; }

.menu { display: flex; flex-direction: column; gap: 73px; padding: 100px 24px 0; }
.menu-item { display: flex; align-items: center; gap: 29px; height: 77px; font-size: 45.5px; letter-spacing: .3px; line-height: 60px; color: #3346dc; white-space: nowrap; }
.menu-item span { padding-bottom: 6px; }
.menu-item .redraw { padding-bottom: 3px; letter-spacing: 1.3px; }
.menu-icon { width: 77px; height: 77px; }

.tabs { display: grid; grid-template-columns: 216px 216px; padding: 24px 24px 0; }
.tab { display: flex; flex-direction: column; align-items: center; height: 108px; padding-top: 14px; background: #fff; font-size: 21px; line-height: 24px; letter-spacing: .6px; color: #4353b7; }
.tab span { margin-top: 16px; margin-right: 2px; }
.tab.selected { background: #7fff80; border-bottom: 4px solid #ff4081; color: #2f6a30; }
.wallet { width: 30px; height: 36px; }
.road { width: 34px; height: 36px; }
.tab .road + span { margin-right: 0; }

.kinds { display: grid; grid-template-columns: 219.5px 1fr; align-items: center; height: 48px; padding-left: 32px; font-size: 30px; white-space: nowrap; }
.kinds label, .ranges label { display: flex; align-items: center; gap: 8px; }
.kinds svg, .ranges svg { width: 32px; height: 32px; }
.ranges { display: grid; grid-template-columns: 126px 160px 1fr; align-items: center; height: 48px; padding-left: 32px; font-size: 16px; letter-spacing: .12px; color: #555; white-space: nowrap; }
.chart { width: 480px; height: 358px; overflow: visible; }
.total { font-size: 17.5px; fill: #ff4444; }
.ticks { font-size: 15.5px; fill: #555; }
.values { font-size: 17px; fill: #4c4c4c; }
.cats { font-size: 18px; fill: #3fae30; }
.share { font-size: 22px; fill: #000; fill-opacity: .75; }
.slice { font-size: 20px; fill: #ff1c10; fill-opacity: .88; }
.center { font-size: 22.5px; fill: #45ab38; }
.center.big { font-size: 30px; }
.legend { font-size: 16px; fill: #666; }

.pill { display: flex; align-items: center; justify-content: center; border-radius: 36px; color: #e9edff; background: linear-gradient(#00b0ff 0%, #1a5cff 42%, #3000ff 80%, #e8e0ff 100%); }
.from-to { width: 132px; height: 70px; margin-left: 24px; padding-top: 2px; font-size: 17px; white-space: nowrap; }

/* Date picker */
.date-screen { background: #646464; }
.date-screen .appbar { background: #191f45; }
.date-screen .back { background: #666; box-shadow: none; }
.dialog { position: absolute; left: 12px; top: 102px; width: 456px; height: 696px; display: flex; flex-direction: column; border-radius: 3px; background: linear-gradient(100deg, #f6f6f6, #eeeeee); box-shadow: 0 2px 12px rgba(0,0,0,.4); }
.dialog-title { height: 100px; margin: 0; padding: 0 25px 0 24px; border-bottom: 4px solid #33b5e5; font-size: 33px; font-weight: 400; letter-spacing: .35px; line-height: 97px; color: #46bce9; }
.month { display: flex; align-items: center; justify-content: space-between; height: 72px; padding: 25px 4px 0 5px; font-size: 29.5px; line-height: 40px; color: #444; }
.month svg { width: 38px; height: 38px; }
.month span { padding-bottom: 6px; }
.calendar { height: 375px; background: #fff; }
.days { display: grid; grid-template-columns: repeat(7, 64px); grid-template-rows: 46px repeat(5, 52px); height: 347px; color: #5a65bb; }
.days b, .days i { display: flex; flex-direction: column; align-items: center; font-size: 18px; line-height: 24px; font-style: normal; }
.days b { padding-top: 8px; font-size: 17px; color: #3b47ae; }
.days i { padding-top: 14px; }
.days .has::after { content: ""; width: 8px; height: 8px; margin-top: 1.500px; border-radius: 50%; background: #0dfb0d; }
.days .picked { height: 48px; width: 48px; padding-top: 14px; margin: 0 8px; border-radius: 50%; background: #33e63b; color: #33677c; }
.note { margin: 0; padding-left: 1px; font-size: 21.5px; letter-spacing: .55px; line-height: 30px; white-space: nowrap; color: #555; }
.star { font-size: 18px; line-height: 1; vertical-align: -3px; }
.actions { display: flex; justify-content: space-between; margin-top: auto; }
.actions .pill { width: 150px; height: 72px; font-size: 24px; }
.actions .cancel { background: linear-gradient(#00a886 0%, #004f3f 45%, #000 80%, #e0e0e0 100%); }

/* Map */
.map { width: 480px; height: 682px; overflow: hidden; }
.street { font-size: 45px; fill: #6f6f6f; stroke: #f2f2f2; stroke-width: 5px; paint-order: stroke; }
.stop { font-size: 56px; fill: #45a5d2; stroke: #f2f2f2; stroke-width: 7px; paint-order: stroke; }
.place { font-size: 56px; fill: #4d4846; stroke: #f2f2f2; stroke-width: 7px; paint-order: stroke; }
.clinic { font-size: 56px; fill: #96433c; stroke: #f6f0f0; stroke-width: 7px; paint-order: stroke; }
.google { font-family: "Open Sans", sans-serif; font-size: 82px; font-weight: 600; stroke: #fff; stroke-width: 6px; paint-order: stroke; }
.trip { font-size: 65px; fill: #2f42cf; }
.cost { font-size: 65px; fill: #d23c3c; }
```
